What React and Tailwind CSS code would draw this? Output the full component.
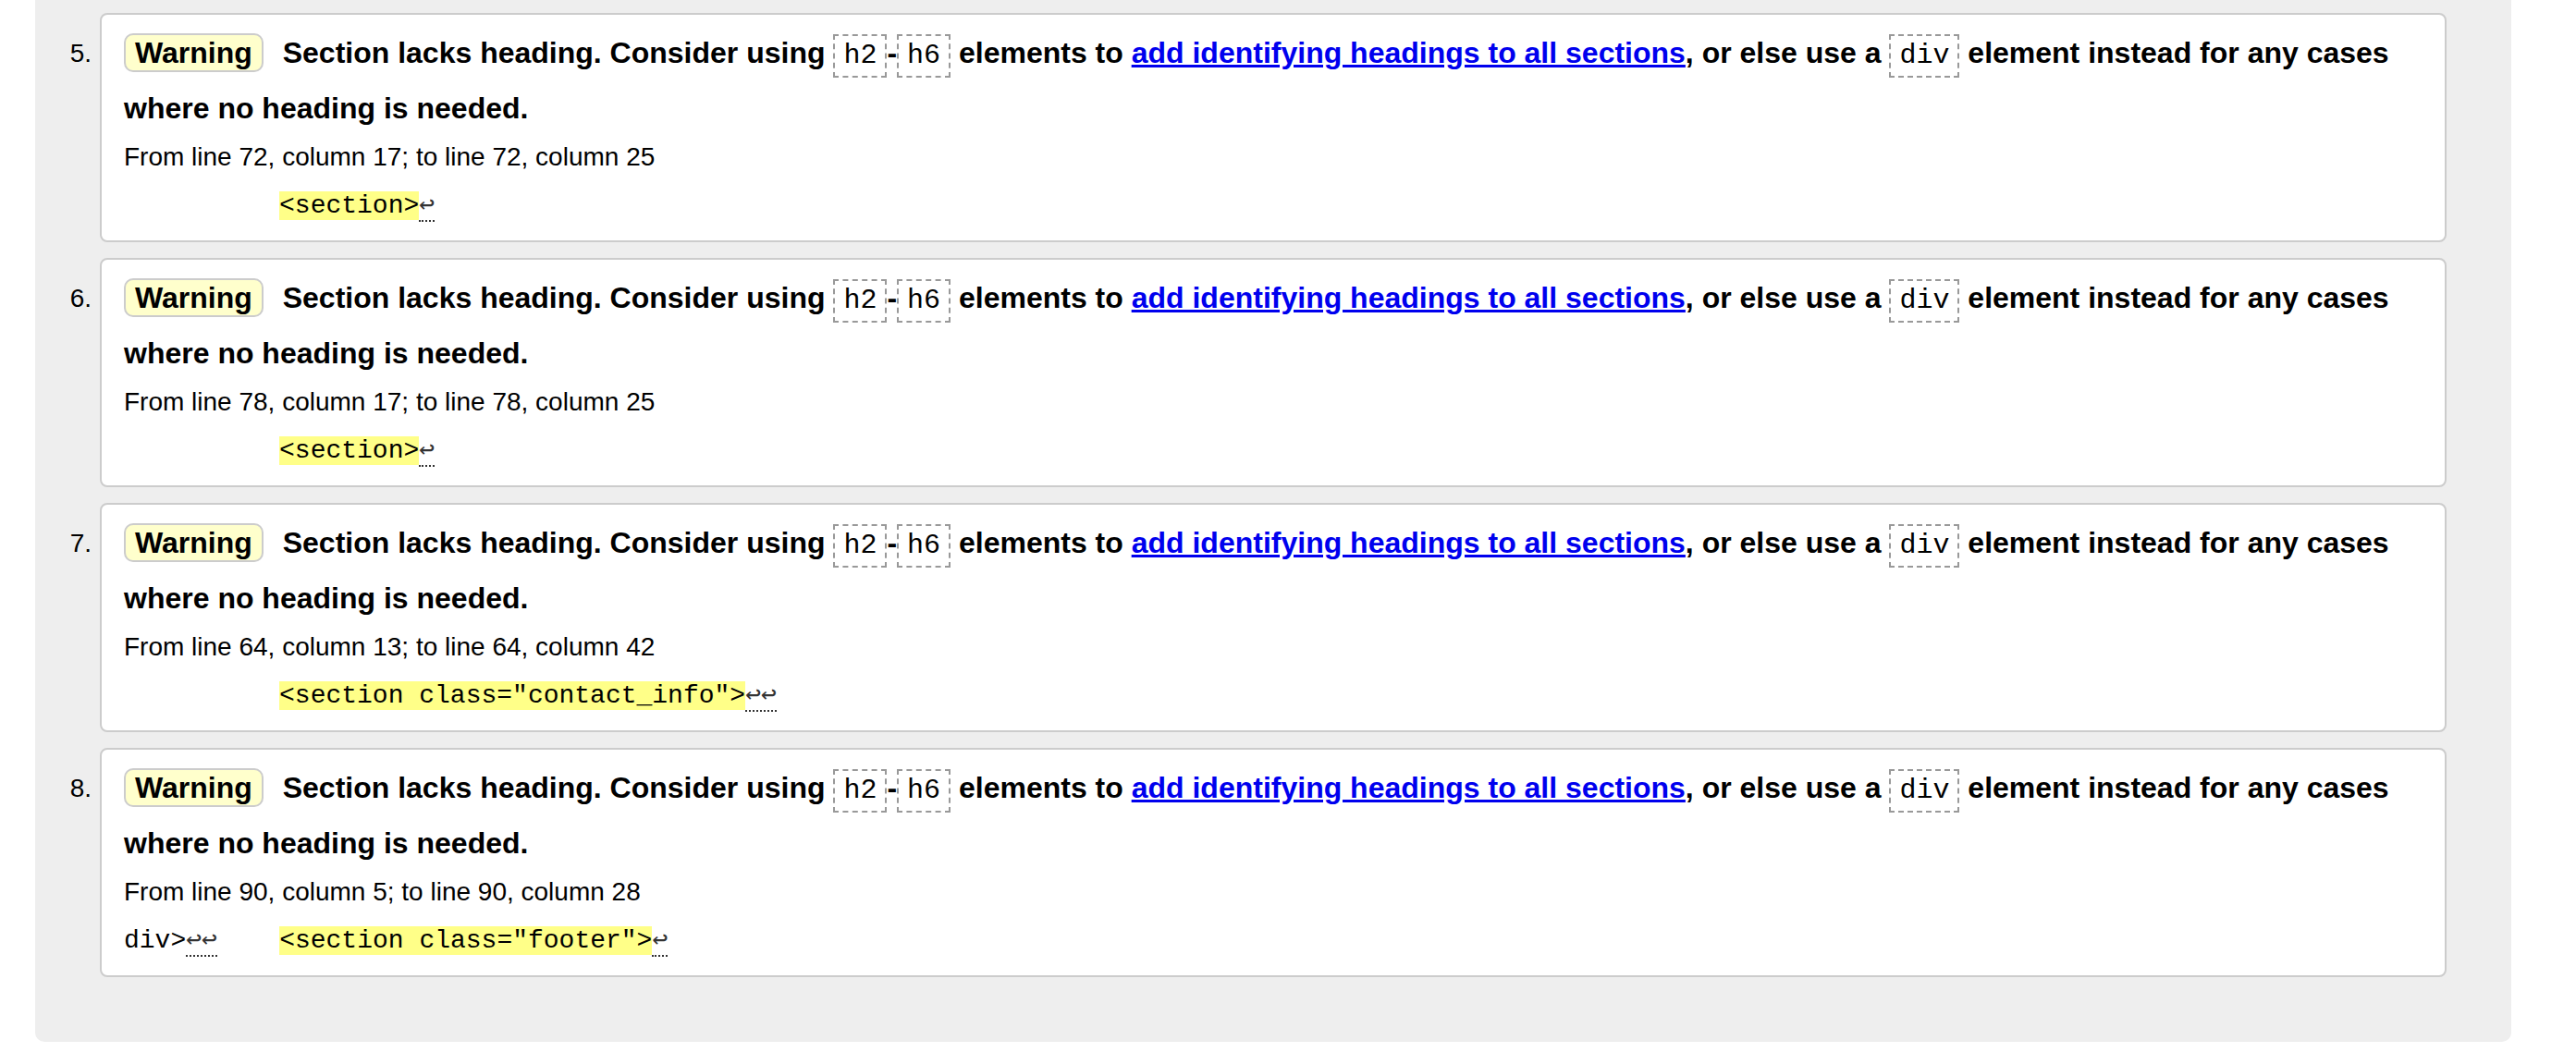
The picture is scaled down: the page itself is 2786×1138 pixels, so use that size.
import React from 'react';

const items = [
  { n: 5, loc: 'From line 72, column 17; to line 72, column 25', pre: '          ', preLf: 0, code: '<section>', lf: 1 },
  { n: 6, loc: 'From line 78, column 17; to line 78, column 25', pre: '          ', preLf: 0, code: '<section>', lf: 1 },
  { n: 7, loc: 'From line 64, column 13; to line 64, column 42', pre: '          ', preLf: 0, code: '<section class="contact_info">', lf: 2 },
  { n: 8, loc: 'From line 90, column 5; to line 90, column 28', pre: 'div>', preLf: 2, gap: '    ', code: '<section class="footer">', lf: 1 },
];

const Code = ({ children }) => (
  <code className="inline-block border-2 border-dashed border-[#999] px-[9px] leading-[43px] font-['Liberation_Mono',monospace] font-normal text-[30px]">
    {children}
  </code>
);

const Lf = ({ count }) => (
  <span className="border-b-2 border-dotted border-[#333] text-[#333]">{'↩'.repeat(count)}</span>
);

const App = () => {
  return (
    <div className="w-full min-h-[1138px] bg-white text-black font-['Liberation_Sans',Arial,sans-serif]">
      <div className="ml-[38px] w-[2678px] bg-[#eeeeee] rounded-b-[10px] pt-[14px] pb-[70px] flex flex-col gap-[17px]">
        {items.map(item => (
          <div key={item.n} className="flex items-start">
            {/* list number */}
            <div className="w-[70px] shrink-0 text-right pr-[9px] pt-[14px] text-[28px] leading-[60px]">
              {item.n}.
            </div>

            {/* message card */}
            <div className="flex-1 mr-[70px] bg-white border-2 border-[#cccccc] rounded-[8px] pl-[24px] pr-[24px] pt-[11px] pb-[15px]">
              <p className="text-[32px] leading-[60px] font-bold">
                <span className="inline-block bg-[#ffffcc] border-2 border-[#cccccc] rounded-[10px] px-[10px] py-[3px] leading-[32px] mr-[12px]">
                  Warning
                </span>{' '}
                Section lacks heading. Consider using <Code>h2</Code>-<Code>h6</Code> elements to{' '}
                <a href="#" className="text-[#0000ee] underline">add identifying headings to all sections</a>, or else use a{' '}
                <Code>div</Code> element instead for any cases where no heading is needed.
              </p>
              <p className="text-[28px] leading-[46px]">{item.loc}</p>
              <p className="mt-[8px] font-['Liberation_Mono',monospace] text-[28px] leading-[44px] whitespace-pre">
                {item.pre}
                {item.preLf > 0 && <Lf count={item.preLf} />}
                {item.gap}
                <span className="bg-[#ffff88]">{item.code}</span>
                <Lf count={item.lf} />
              </p>
            </div>
          </div>
        ))}
      </div>
    </div>
  );
};

export default App;
